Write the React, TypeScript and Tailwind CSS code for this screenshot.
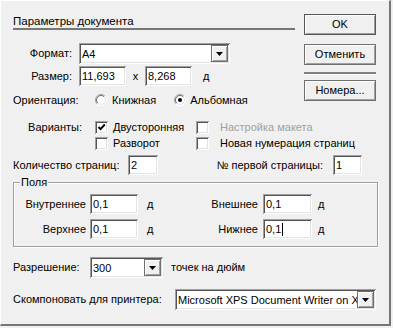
import React from "react";

const sunken =
  "bg-white shadow-[inset_1px_1px_0_#a0a0a0,inset_-1px_-1px_0_#fff,inset_2px_2px_0_#555,inset_-2px_-2px_0_#e3e3e3]";
const raised =
  "bg-[#f0f0f0] border border-[#707070] shadow-[inset_1px_1px_0_#fff,inset_-1px_-1px_0_#a0a0a0]";

function Edit({ value, width, caret }: { value: string; width: string; caret?: boolean }) {
  return (
    <div className={`${sunken} ${width} h-[20px] shrink-0 flex items-center pl-[3px] pt-[1px]`}>
      <span>{value}</span>
      {caret && <span className="w-px h-[13px] bg-black ml-px" />}
    </div>
  );
}

function Arrow() {
  return (
    <svg width="7" height="4" viewBox="0 0 7 4">
      <polygon points="0,0 7,0 3.5,4" fill="#000" />
    </svg>
  );
}

function Combo({ value, width }: { value: string; width: string }) {
  return (
    <div className={`${sunken} ${width} h-[21px] shrink-0 flex items-center p-[2px]`}>
      <span className="flex-1 overflow-hidden whitespace-nowrap pl-[1px] pt-px">{value}</span>
      <span className={`${raised} w-[17px] h-[17px] shrink-0 flex items-center justify-center`}>
        <Arrow />
      </span>
    </div>
  );
}

function Button({ label }: { label: string }) {
  return (
    <div className={`${raised} w-[72px] h-[21px] flex items-center justify-center`}>{label}</div>
  );
}

function Radio({ checked }: { checked?: boolean }) {
  return (
    <svg width="12" height="12" viewBox="0 0 12 12" className="shrink-0">
      <circle cx="6" cy="6" r="5.5" fill="#fff" />
      <path d="M2.1 9.9A5.5 5.5 0 0 1 9.9 2.1" fill="none" stroke="#a0a0a0" />
      <path d="M2.8 9.2A4.5 4.5 0 0 1 9.2 2.8" fill="none" stroke="#696969" />
      <path d="M9.9 2.1A5.5 5.5 0 0 1 2.1 9.9" fill="none" stroke="#fff" />
      <path d="M9.2 2.8A4.5 4.5 0 0 1 2.8 9.2" fill="none" stroke="#e3e3e3" />
      {checked && <circle cx="6" cy="6" r="2" fill="#000" />}
    </svg>
  );
}

function Check({ checked, disabled }: { checked?: boolean; disabled?: boolean }) {
  return (
    <span
      className={`${sunken} ${disabled ? "bg-[#f0f0f0]" : ""} w-[13px] h-[13px] shrink-0 flex items-center justify-center`}
    >
      {checked && (
        <svg width="9" height="9" viewBox="0 0 9 9">
          <path d="M1.5 4L3.5 6.2L7.8 1.5" fill="none" stroke="#000" strokeWidth="1.9" />
        </svg>
      )}
    </span>
  );
}

export default function App() {
  return (
    <div className="w-[393px] h-[328px] bg-[#f0f0f0] font-['Liberation_Sans',Arial,sans-serif] text-[11px] leading-[13px] text-black">
      <div className="w-[391px] h-[326px] border-t border-l border-white border-r-2 border-b-2 border-r-[#777] border-b-[#777] pl-[12px] flex flex-col">
        {/* top part */}
        <div className="flex">
          <div className="w-[291px] shrink-0 flex flex-col">
            <div className="mt-[13px] w-[282px] h-[16px] border-b-2 border-[#777] leading-[14px] text-[11.5px]">
              Параметры документа
            </div>

            <div className="mt-[13px] h-[21px] flex items-center">
              <span className="w-[66px] shrink-0 text-right pr-[7px]">Формат:</span>
              <Combo value="A4" width="w-[151px]" />
            </div>

            <div className="mt-[2px] h-[20px] flex items-center">
              <span className="w-[66px] shrink-0 text-right pr-[7px]">Размер:</span>
              <Edit value="11,693" width="w-[47px]" />
              <span className="w-[19px] text-center">x</span>
              <Edit value="8,268" width="w-[47px]" />
              <span className="ml-[11px]">д</span>
            </div>

            <div className="mt-[7px] h-[14px] flex items-center whitespace-nowrap">
              <span className="w-[82px] shrink-0">Ориентация:</span>
              <span className="flex items-center gap-[5px]">
                <Radio />
                Книжная
              </span>
              <span className="ml-[18px] flex items-center gap-[4px]">
                <Radio checked />
                Альбомная
              </span>
            </div>

            <div className="mt-[13px] h-[15px] flex items-center whitespace-nowrap">
              <span className="w-[82px] shrink-0 text-right pr-[13px]">Варианты:</span>
              <span className="w-[101px] shrink-0 flex items-center gap-[5px]">
                <Check checked />
                Двусторонняя
              </span>
              <span className="shrink-0 flex items-center gap-[11px] text-[#a0a0a0]">
                <Check disabled />
                Настройка макета
              </span>
            </div>

            <div className="mt-[2px] h-[13px] flex items-center whitespace-nowrap">
              <span className="w-[82px] shrink-0" />
              <span className="w-[101px] shrink-0 flex items-center gap-[5px]">
                <Check />
                Разворот
              </span>
              <span className="shrink-0 flex items-center gap-[11px]">
                <Check />
                Новая нумерация страниц
              </span>
            </div>
          </div>

          <div className="flex flex-col">
            <div className="mt-[13px] border border-[#555]">
              <div className="bg-[#f0f0f0] w-[70px] h-[19px] flex items-center justify-center shadow-[inset_1px_1px_0_#fff,inset_-1px_-1px_0_#a0a0a0]">
                OK
              </div>
            </div>
            <div className="mt-[9px]">
              <Button label="Отменить" />
            </div>
            <div className="mt-[7px] w-[72px] h-[3px] border-t-2 border-[#808080] border-b border-b-white" />
            <div className="mt-[5px]">
              <Button label="Номера..." />
            </div>
          </div>
        </div>

        {/* pages count */}
        <div className="mt-[5px] h-[20px] flex items-center whitespace-nowrap">
          <span className="w-[115px] shrink-0">Количество страниц:</span>
          <Edit value="2" width="w-[30px]" />
          <span className="w-[165px] shrink-0 text-right">№ первой страницы:</span>
          <span className="ml-[10px]">
            <Edit value="1" width="w-[29px]" />
          </span>
        </div>

        {/* margins group */}
        <div className="mt-[7px] relative w-[365px] h-[65px] border border-[#a0a0a0] shadow-[1px_1px_0_#fff,inset_1px_1px_0_#fff]">
          <span className="absolute -top-[7px] left-[6px] px-px bg-[#f0f0f0]">Поля</span>
          <div className="mt-[11px] grid grid-cols-[76px_48px_50px_75px_49px_auto] grid-rows-[20px_20px] gap-y-[5px] items-center">
            <span className="text-right pr-[4px]">Внутреннее</span>
            <Edit value="0,1" width="w-[48px]" />
            <span className="pl-[9px]">д</span>
            <span className="text-right pr-[5px]">Внешнее</span>
            <Edit value="0,1" width="w-[49px]" />
            <span className="pl-[6px]">д</span>

            <span className="text-right pr-[4px]">Верхнее</span>
            <Edit value="0,1" width="w-[48px]" />
            <span className="pl-[9px]">д</span>
            <span className="text-right pr-[5px]">Нижнее</span>
            <Edit value="0,1" width="w-[49px]" caret />
            <span className="pl-[6px]">д</span>
          </div>
        </div>

        {/* resolution */}
        <div className="mt-[10px] h-[21px] flex items-center whitespace-nowrap">
          <span className="w-[77px] shrink-0">Разрешение:</span>
          <Combo value="300" width="w-[73px]" />
          <span className="ml-[8px]">точек на дюйм</span>
        </div>

        <div className="mt-[11px] h-[21px] flex items-center whitespace-nowrap">
          <span className="w-[162px] shrink-0">Скомпоновать для принтера:</span>
          <Combo value="Microsoft XPS Document Writer on XPSPort:" width="w-[201px]" />
        </div>
      </div>
    </div>
  );
}
